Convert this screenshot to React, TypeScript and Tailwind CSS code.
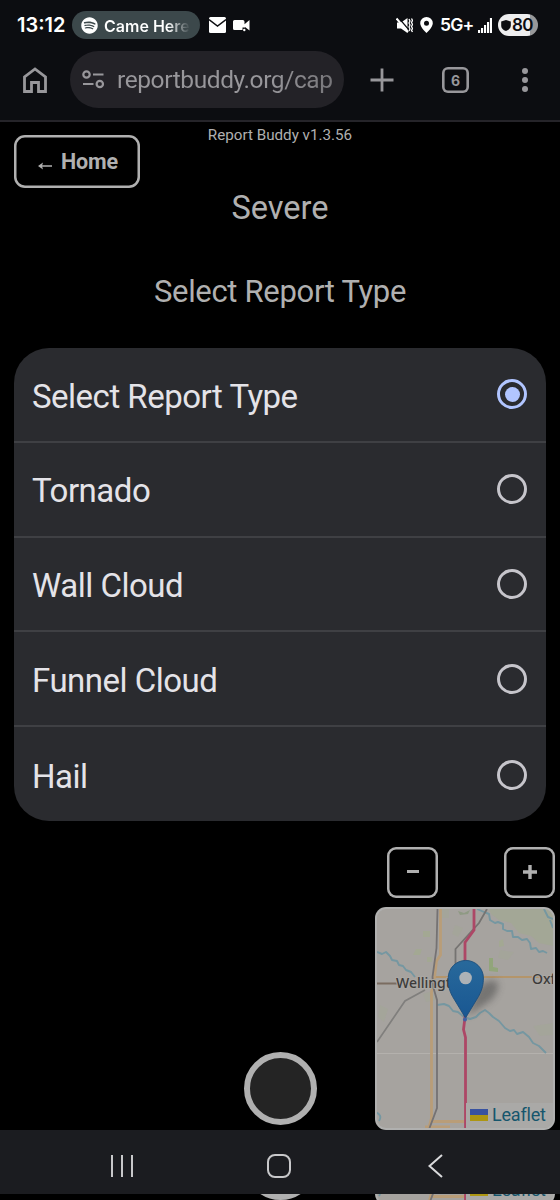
import { FaSpotify } from 'react-icons/fa'

const reportTypes = [
  'Select Report Type',
  'Tornado',
  'Wall Cloud',
  'Funnel Cloud',
  'Hail',
]

function StatusBar() {
  return (
    <div className="flex h-[50px] items-center pl-[17px] pr-[22px] text-white">
      <span className="w-[49px] whitespace-nowrap font-['Inter'] text-[20px] font-semibold">
        13:12
      </span>
      <div className="ml-[6px] flex h-[28px] w-[128px] items-center rounded-full bg-[#3c484b] pl-[9px]">
        <FaSpotify className="size-[17px] shrink-0" />
        <span className="ml-[6px] w-[86px] whitespace-nowrap bg-linear-to-r from-white from-75% to-[#3c484b] bg-clip-text pt-px font-['Inter'] text-[16px] font-semibold text-transparent">
          Came Here
        </span>
      </div>
      <svg className="ml-[9px] h-[16px] w-[17px]" viewBox="0 0 17 16">
        <rect width="17" height="16" rx="1.5" fill="#fff" />
        <path d="M0 2.5 8.5 9 17 2.5" fill="none" stroke="#0c0d11" strokeWidth="1.4" />
      </svg>
      <svg className="ml-[7px] h-[13px] w-[18px]" viewBox="0 0 18 13">
        <path
          d="M1.5 1h8.3Q11.500 1 11.500 2.700V5.200L16.500 1v10.500L12 8V8.500H9.500V11h-8Q0 11 0 9.500v-7Q0 1 1.500 1Z"
          fill="#fff"
        />
        <circle cx="11.300" cy="11" r="1.200" fill="#fff" />
      </svg>
      <svg className="ml-auto h-[17px] w-[17px]" viewBox="0 0 17 17">
        <path d="M1 5.500h4L11.500 1v15L5 11.500H1Z" fill="#fff" />
        <path d="m2 0 11 13" stroke="#0c0d11" strokeWidth="1.200" />
        <path d="m.5 1.500 11.500 13.500" stroke="#fff" strokeWidth="2" />
        <path
          d="m13 2 1 2-1 2 1 2-1 2 1 2-1 2M15.500 1.500l1 2-1 2 1 2-1 2 1 2-1 2 1 1.500"
          fill="none"
          stroke="#fff"
          strokeWidth="1.300"
        />
      </svg>
      <svg className="ml-[7px] h-[16px] w-[13px]" viewBox="0 0 13 16">
        <path
          fillRule="evenodd"
          d="M6.500 0A6.300 6.300 0 0 0 .2 6.300C.2 10.500 6.500 16 6.500 16s6.300-5.500 6.300-9.700A6.300 6.300 0 0 0 6.500 0Zm0 3.800a2.500 2.500 0 1 1 0 5 2.500 2.500 0 0 1 0-5Z"
          fill="#fff"
        />
      </svg>
      <span className="ml-[7px] w-[33px] whitespace-nowrap pt-px font-['Inter'] text-[17.500px] font-semibold tracking-[-0.800px]">
        5G+
      </span>
      <svg className="ml-[5px] h-[15px] w-[14px]" viewBox="0 0 14 15" fill="#fff">
        <rect x="0" y="12" width="2.100" height="3" />
        <rect x="3" y="10" width="2.100" height="5" />
        <rect x="6" y="7" width="2.100" height="8" />
        <rect x="9" y="4" width="2.100" height="11" />
        <rect x="11.900" y="0" width="2.100" height="15" />
      </svg>
      <div className="ml-[6px] flex h-[22px] w-[40px] items-center rounded-full bg-linear-to-r from-[#eeeeef] from-80% to-[#98989a] to-80% pl-[3px] text-[#0c0d11]">
        <svg className="h-[11px] w-[10px]" viewBox="0 0 10 11">
          <path d="m5 0 4.800 1.500V6Q9.500 9.500 5 11 .5 9.500.2 6V1.500Z" fill="#0c0d11" />
        </svg>
        <span className="ml-px font-['Inter'] text-[17px] font-semibold leading-none tracking-[-0.600px]">
          80
        </span>
      </div>
    </div>
  )
}

function AddressBar() {
  return (
    <div className="flex h-[72px] items-start border-b-2 border-[#252429] pl-[23px] pt-px text-[#98979b]">
      <svg className="mt-[16px] h-[26px] w-[24px]" viewBox="0 0 24 26">
        <path
          d="M1.500 24.500V10L12 2l10.500 8v14.500h-7V15.500h-7v9Z"
          fill="none"
          stroke="currentColor"
          strokeWidth="2.800"
        />
      </svg>
      <div className="ml-[23px] flex h-[57px] w-[274px] items-center rounded-full bg-[#232227] pl-[12px]">
        <svg
          className="h-[19px] w-[23px]"
          viewBox="0 0 23 19"
          fill="none"
          stroke="currentColor"
          strokeWidth="2.200"
        >
          <circle cx="4.500" cy="4.500" r="3.200" />
          <circle cx="17.800" cy="14" r="3.200" />
          <path d="M11 4.500h10.500M1 14h10.500" />
        </svg>
        <span className="ml-[12px] whitespace-nowrap bg-linear-to-r from-[#98979b] from-70% to-[#77767a] bg-clip-text pt-[2px] font-['Roboto'] text-[24.500px] tracking-[-0.400px] text-transparent">
          reportbuddy.org/cap
        </span>
      </div>
      <svg className="ml-[26px] mt-[17px] size-[24px]" viewBox="0 0 24 24">
        <path d="M12 .5v23M.5 12h23" stroke="currentColor" strokeWidth="2.800" />
      </svg>
      <div className="ml-[48px] mt-[16px] flex h-[26px] w-[27px] items-center justify-center rounded-[6px] font-['Inter'] text-[14px] font-bold shadow-[inset_0_0_0_2.600px_#98979b]">
        6
      </div>
      <div className="ml-[53px] mt-[17px] flex flex-col gap-[3px]">
        <span className="size-[6px] rounded-full bg-current" />
        <span className="size-[6px] rounded-full bg-current" />
        <span className="size-[6px] rounded-full bg-current" />
      </div>
    </div>
  )
}

function ReportMap() {
  return (
    <svg className="block h-[223px] w-[180px]" viewBox="375 907 180 223">
      <defs>
        <clipPath id="map-frame">
          <rect x="377" y="909" width="176" height="219" rx="9" />
        </clipPath>
        <linearGradient id="pin" x1="0" y1="0" x2="0" y2="1">
          <stop offset="0" stopColor="#28699b" />
          <stop offset="1" stopColor="#195792" />
        </linearGradient>
        <filter id="soft" x="-40%" y="-40%" width="180%" height="180%">
          <feGaussianBlur stdDeviation="3.500" />
        </filter>
      </defs>
      <rect x="375" y="907" width="180" height="223" rx="11" fill="#b0b0af" />
      <g clipPath="url(#map-frame)" fill="none">
        <rect x="377" y="909" width="176" height="219" fill="#a6a39f" />
        <g fill="#a3a893">
          <path d="M489 909h64v37l-14-3-8-7-12-3-8-10-12-3-8-6Z" opacity=".7" />
          <path d="M489 958h4v9l5 1v4l-9-1Z" fill="#92a57b" />
          <path d="m499 941 4-2 1 7-5 1Z" />
          <path d="M423 931h7v6h-7zM416 949h6l-2 6h-7zM427 957h5v5h-5z" />
          <path d="M458 911l6 2 6-3-2 4-8 1Z" fill="#8f9a84" />
          <path
            d="M533 1026l20-3v12l-13 1ZM380 1005l8 4-4 13-6-5ZM423 994l9-3 4 9-10 2ZM440 909h9v9h-8ZM455 925l8 3-5 9-6-3ZM500 950l14 2-6 8-10-2Z"
            opacity=".4"
          />
        </g>
        <path d="M377 1053.500h176" stroke="#b7b5b1" strokeWidth=".8" />
        <g stroke="#7597a1" strokeWidth="1.900" strokeLinejoin="round">
          <path d="m477 909 7 3 5 2 1 6 5 3 3-1 5 2v5l4 2 5 0 1 6 5 0 4 3 5-1 3 4 1 6 5-1 3 4 4-1 4 2" />
          <path d="m377 952 5 2 4-2 4 4 2 4 5 1 2 4 4 1 3 4 5 2 4 5" />
          <path d="m437 1005 7-1 5 2 4 5 5 1 6 5 6 2 6-2 4-4 5-3 4 3 4 4 6 4 6 7 5 3 4-1 3 4 6-2 6 5 4 6 6 3 7 7" />
          <path d="m544 909 4 8 5 2M550 920l3 8M375 1112q8 3 4 9" />
        </g>
        <path d="m377 1042 28-41 20-11" stroke="#807f7d" strokeWidth="1.700" />
        <path d="m487 909-8 14-23.500 26v20" stroke="#757371" strokeWidth="1.800" />
        <path d="M377 983.500h20" stroke="#7a6c60" strokeWidth="2" />
        <path d="M435 977h118" stroke="#b4956a" strokeWidth="2.200" />
        <path
          d="M440.500 909v46l-4 6-2 16-3 15v126l-3 11M432 1121.500h34M425 1127h25"
          stroke="#b99d78"
          strokeWidth="2.800"
        />
        <path
          d="m437.500 909-1 39-4 29 1 11 3.500 12v108l-7.500 20"
          stroke="#757273"
          strokeWidth="1.800"
        />
        <path d="M474 909v21l-9 12.500v75l-1.500 12 2 8V1128" stroke="#ad4766" strokeWidth="2.800" />
        <g
          fill="#3b3a39"
          stroke="#aaa7a3"
          strokeWidth="2"
          paintOrder="stroke"
          fontFamily="'Noto Sans', sans-serif"
          fontSize="14"
          fontWeight="500"
        >
          <text x="396" y="988">
            Wellingt
          </text>
          <text x="532" y="983.500">
            Oxf
          </text>
        </g>
        <path
          d="M467 1016l10-26q8-12 19-9 6 6-5 19Z"
          fill="#444"
          opacity=".5"
          filter="url(#soft)"
        />
        <path
          d="M465.500 1018 452.500 996.500C448.500 989 448.200 984 448.200 978A17.600 17.600 0 0 1 483.400 978C483.400 984 482.500 989 478.500 996.500Z"
          fill="url(#pin)"
          stroke="#1d4f7d"
          strokeWidth=".9"
        />
        <circle cx="465.600" cy="978" r="6.300" fill="#adb2b6" />
        <circle cx="465" cy="1019.500" r="2" fill="#3f62a6" />
      </g>
    </svg>
  )
}

function CaptureArea() {
  return (
    <div className="flex h-[283px] w-[560px] shrink-0">
      <div className="flex w-[375px] items-end pb-[5px] pl-[244px]">
        <button className="size-[73px] rounded-full border-[6px] border-[#b0b0b0] bg-[#242424]" />
      </div>
      <div className="flex flex-col">
        <div className="flex h-[60px] justify-between pl-[12px]">
          <button className="flex size-[51px] items-center justify-center rounded-[9px] shadow-[inset_0_0_0_2.500px_#b0b0b0]">
            <span className="mb-[2px] h-[3px] w-[12px] bg-[#b0b0b0]" />
          </button>
          <button className="flex size-[51px] items-center justify-center rounded-[9px] shadow-[inset_0_0_0_2.500px_#b0b0b0]">
            <svg className="mb-[2px] size-[14px]" viewBox="0 0 14 14">
              <path d="M7 0v14M0 7h14" stroke="#b0b0b0" strokeWidth="3.400" />
            </svg>
          </button>
        </div>
        <div className="relative">
          <ReportMap />
          <div className="absolute bottom-[2px] right-[2px] flex h-[25px] w-[87px] items-center rounded-br-[9px] bg-[#aaa9a7] pb-[2px] pl-[4px] font-['Roboto'] text-[18px] text-[#16566d]">
            <span className="mr-[4px] flex h-[12px] w-[18px] flex-col">
              <span className="flex-1 bg-[#3852a0]" />
              <span className="flex-1 bg-[#ad9613]" />
            </span>
            <span className="tracking-[-0.200px]">Leaflet</span>
          </div>
        </div>
      </div>
    </div>
  )
}

function NavBar() {
  return (
    <div className="flex h-[64px] shrink-0 items-center bg-[#1b1c20] pl-[111px] pt-[8px]">
      <div className="flex h-[22px] w-[22px] justify-between">
        <span className="w-[2px] bg-[#c8c8ca]" />
        <span className="w-[2px] bg-[#c8c8ca]" />
        <span className="w-[2px] bg-[#c8c8ca]" />
      </div>
      <div className="ml-[134px] size-[24px] rounded-[8px] border-2 border-[#c8c8ca]" />
      <svg className="ml-[137px] h-[24px] w-[15px]" viewBox="0 0 15 24">
        <path d="M14 1 1.500 12 14 23" fill="none" stroke="#dadadc" strokeWidth="2" />
      </svg>
    </div>
  )
}

export default function App() {
  return (
    <div className="flex h-[1200px] w-[560px] flex-col overflow-hidden bg-black font-['Roboto',sans-serif]">
      <header className="h-[122px] shrink-0 bg-[#0c0d11]">
        <StatusBar />
        <AddressBar />
      </header>
      <main className="flex h-[1008px] shrink-0 flex-col text-[#b0b0b0]">
        <div className="grid h-[226px] shrink-0 grid-cols-[140px_280px_140px]">
          <button className="ml-[14px] mt-[13px] flex h-[53px] w-[126px] items-center justify-center rounded-[11px] pl-[2px] pt-[2px] text-[21.500px] font-bold tracking-[-0.200px] shadow-[inset_0_0_0_2.500px_#b0b0b0]">
            <svg className="mr-[9px] mt-[6px] h-[8px] w-[14px]" viewBox="0 0 14 8">
              <path d="M14 4H2" stroke="currentColor" strokeWidth="1.500" />
              <path d="M0 4 5 .5 4 4l1 3.500Z" fill="currentColor" />
            </svg>
            Home
          </button>
          <div className="flex flex-col items-center whitespace-nowrap">
            <p className="mt-[3px] text-[15.200px] leading-[20px]">Report Buddy v1.3.56</p>
            <h1 className="mt-[43px] text-[32.500px] leading-[40px]">Severe</h1>
            <h2 className="mt-[44px] text-[31px] leading-[40px] tracking-[-0.320px]">
              Select Report Type
            </h2>
          </div>
        </div>
        <ul className="mx-[14px] h-[473px] shrink-0 divide-y-2 divide-[#3f4044] overflow-hidden rounded-[35px] bg-[#2a2b2f] text-[33px] tracking-[-0.500px] text-[#e4e3e8]">
          {reportTypes.map((type, index) => (
            <li
              key={type}
              className="flex h-[94.800px] items-center justify-between pl-[18px] pr-[19px]"
            >
              <span className="pt-[4px]">{type}</span>
              {index === 0 ? (
                <span className="flex size-[30px] items-center justify-center rounded-full border-[3px] border-[#b1c5ff]">
                  <span className="size-[15px] rounded-full bg-[#b1c5ff]" />
                </span>
              ) : (
                <span className="size-[30px] rounded-full border-[3px] border-[#c6c5cb]" />
              )}
            </li>
          ))}
        </ul>
        <div className="mt-[26px]">
          <CaptureArea />
        </div>
      </main>
      <NavBar />
      {/* sliver of the page that shows under the navigation bar */}
      <div className="h-[6px] shrink-0 overflow-hidden">
        <div className="-mt-[272px]">
          <CaptureArea />
        </div>
      </div>
    </div>
  )
}
